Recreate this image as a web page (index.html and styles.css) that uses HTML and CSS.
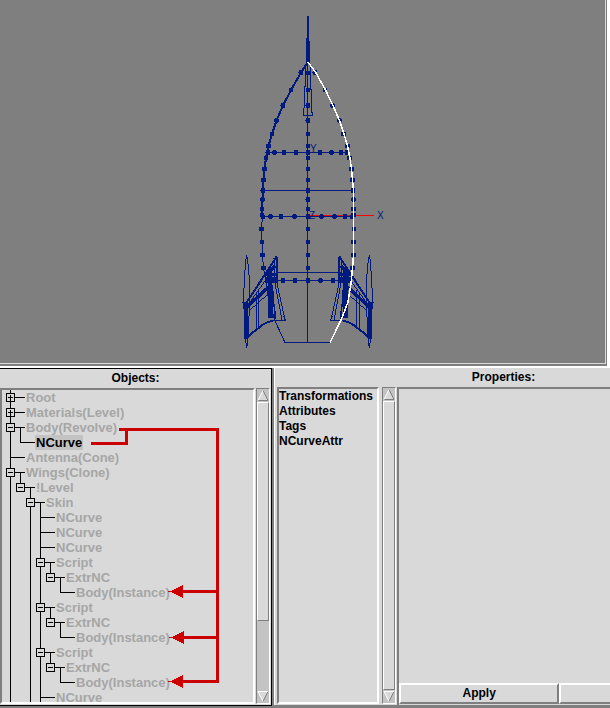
FILE: index.html
```html
<!DOCTYPE html>
<html lang="en">
<head>
<meta charset="utf-8">
<title>Modeler</title>
<link rel="stylesheet" href="styles.css">
</head>
<body>
<main class="app">
  <section class="view" aria-label="Front view">
    <svg class="scene" viewBox="0 0 605 363" role="img" aria-label="Rocket wireframe">
      <path class="axis" d="M308 215.5H374"/>
      <g class="wire">
        <path class="bold" d="M308 16V62"/>
        <path d="M306.500 38V62L305.500 66V86H304.500V105L303.500 111V115.500H312.500V113L311.500 112V89H310.500V68L309.500 62V41M307.500 62V342"/>
        <path class="hull" d="M308 62L301 72.500L291 90L283 105.500L276.500 120.500L272 134L268.500 146L266 158L264.500 169L263.500 180L262.500 199L262 215"/>
        <path d="M262.500 215L261.500 229L262 242L262.500 255L263.500 268L266 281L268 296L275 321L285 342.500H330M267 152.500H349M263 190.500H353M262 216.500H353M276 272.500H342M268 280.500H350"/>
      </g>
      <path class="dots" d="M301 72.500h0M291 90h0M283 105.500h0M276.500 120.500h0M272 134h0M268.500 146h0M266 158h0M264.500 169h0M263.500 180h0M263 190.500h0M262.500 199.500h0M262 209h0M262 215h0M261.500 229h0M262 242h0M262.500 255h0M263.500 268h0
        M315 72.500h0M325 90h0M332.500 105.500h0M339.500 120.500h0M343.500 134h0M347.500 146h0M349.500 158h0M351.500 169h0M352.500 180h0M353 190.500h0M353.500 199.500h0M353.500 209h0M353.500 215h0M354 229h0M353.500 242h0M353.500 255h0M352.500 268h0
        M308 73h0M308 90h0M308 105.500h0M308 120.500h0M308 134h0M308 146h0M308 158h0M308 169h0M308 180h0M308 190.500h0M308 199.500h0M308 209h0M308 229h0M308 242h0M308 255h0M308 268h0
        M268 152.500h0M274.500 152.500h0M284 152.500h0M296 152.500h0M308 152.500h0M320 152.500h0M331.500 152.500h0M341 152.500h0M347 152.500h0
        M263 217h0M270.500 216.500h0M281 216.500h0M294.500 216.500h0M308 216.500h0M321.500 216.500h0M334.500 216.500h0M345 216.500h0M352 217h0
        M270 280.500h0M275 280.500h0M283 280.500h0M295 280.500h0M308 280.500h0M320.500 280.500h0M333 280.500h0M341 280.500h0M346 280.500h0"/>
      <g transform="translate(230 235) scale(.33333)">
        <g id="fin" class="fin">
          <path d="M50 60L46 85L43 150L40 175V205L43 230L45 300L50 340L55 300L59 190L58 130L54 85ZM36 203H48"/>
          <path class="beam" d="M50 216L118 154"/>
          <path class="edge" d="M48 205L138 68M50 312L66 294L82 282L97 270L112 262L130 256"/>
          <path d="M56 207L132 100M60 225L120 172M138 66L142 150L155 210L166 258M132 70L134 140L148 212L156 256M126 100V160L138 252M134 66H142V130M110 105L116 160"/>
          <path class="post" d="M49 200V312M120 108V250"/>
          <path class="beam" d="M106 120L136 92M104 140H138M106 118H140M104 130H142"/>
          <path d="M80 172V284M87 166V278M130 256H167L160 244M127 150L128 250M128 150L134 248"/>
        </g>
        <use href="#fin" transform="translate(468 0) scale(-1 1)"/>
      </g>
      <path class="curve" d="M308 62L316 73L325.500 90L333 105.500L339.500 120.500L344 134L347.500 146L350 158L351.500 169L352.500 180L353.500 190V255L352.500 268L351 284L348 302L341.500 319L330 342.500"/>
      <g class="labels"><text x="310" y="152">Y</text><text x="309" y="219">Z</text><text x="377" y="219">X</text></g>
    </svg>
  </section>

  <div class="panels">
    <section class="objects">
      <h2>Objects:</h2>
      <div class="pane">
        <div class="tree">
          <ul>
            <li class="more"><div class="row"><button class="toggle plus" aria-label="Expand Root"></button><span>Root</span></div></li>
            <li class="more"><div class="row"><button class="toggle plus" aria-label="Expand Materials"></button><span>Materials(Level)</span></div></li>
            <li class="more"><div class="row"><button class="toggle" aria-label="Collapse Body"></button><span>Body(Revolve)</span></div>
              <ul><li><div class="row"><span class="selected">NCurve</span></div></li></ul>
            </li>
            <li class="more"><div class="row"><span>Antenna(Cone)</span></div></li>
            <li class="more"><div class="row"><button class="toggle" aria-label="Collapse Wings"></button><span>Wings(Clone)</span></div>
              <ul><li><div class="row"><button class="toggle" aria-label="Collapse Level"></button><span>!Level</span></div>
                <ul><li class="more"><div class="row"><button class="toggle" aria-label="Collapse Skin"></button><span>Skin</span></div>
                  <ul>
                    <li class="more"><div class="row"><span>NCurve</span></div></li>
                    <li class="more"><div class="row"><span>NCurve</span></div></li>
                    <li class="more"><div class="row"><span>NCurve</span></div></li>
                    <li class="more"><div class="row"><button class="toggle" aria-label="Collapse Script"></button><span>Script</span></div>
                      <ul><li><div class="row"><button class="toggle" aria-label="Collapse ExtrNC"></button><span>ExtrNC</span></div>
                        <ul><li><div class="row"><span>Body(Instance)</span></div></li></ul></li></ul>
                    </li>
                    <li class="more"><div class="row"><button class="toggle" aria-label="Collapse Script"></button><span>Script</span></div>
                      <ul><li><div class="row"><button class="toggle" aria-label="Collapse ExtrNC"></button><span>ExtrNC</span></div>
                        <ul><li><div class="row"><span>Body(Instance)</span></div></li></ul></li></ul>
                    </li>
                    <li class="more"><div class="row"><button class="toggle" aria-label="Collapse Script"></button><span>Script</span></div>
                      <ul><li><div class="row"><button class="toggle" aria-label="Collapse ExtrNC"></button><span>ExtrNC</span></div>
                        <ul><li><div class="row"><span>Body(Instance)</span></div></li></ul></li></ul>
                    </li>
                    <li class="more"><div class="row"><span>NCurve</span></div></li>
                  </ul></li></ul></li></ul>
            </li>
          </ul>
          <svg class="links" width="252" height="312" viewBox="2 390 252 312" aria-hidden="true">
            <path d="M119 429.500H217.500V681.500H183M91 443.500H126.500V429.500M183 591.500H217.500M183 637.500H217.500"/>
            <path class="tip" d="M168 591h3l12-6v13l-12-6h-3ZM169 637h3l12-6v13l-12-6h-3ZM168 681h3l12-6v13l-12-6h-3Z"/>
          </svg>
        </div>
        <div class="scroll">
          <button class="arrow" aria-label="Scroll up"><svg viewBox="0 0 12 12"><path class="face" d="M6 1L11 11H1Z"/><path class="dark" d="M6 1L11 11H1"/><path class="lite" d="M1 11L6 1"/></svg></button>
          <div class="trough"><div class="thumb part"></div></div>
          <button class="arrow" aria-label="Scroll down"><svg viewBox="0 0 12 12"><path class="face" d="M1 1H11L6 11Z"/><path class="dark" d="M11 1L6 11"/><path class="lite" d="M11 1H1L6 11"/></svg></button>
        </div>
      </div>
    </section>

    <section class="properties">
      <div class="attributes">
        <ul class="list"><li>Transformations</li><li>Attributes</li><li>Tags</li><li>NCurveAttr</li></ul>
        <div class="scroll">
          <button class="arrow" aria-label="Scroll up"><svg viewBox="0 0 12 12"><path class="face" d="M6 1L11 11H1Z"/><path class="dark" d="M6 1L11 11H1"/><path class="lite" d="M1 11L6 1"/></svg></button>
          <div class="trough"><div class="thumb"></div></div>
          <button class="arrow" aria-label="Scroll down"><svg viewBox="0 0 12 12"><path class="face" d="M1 1H11L6 11Z"/><path class="dark" d="M11 1L6 11"/><path class="lite" d="M11 1H1L6 11"/></svg></button>
        </div>
      </div>
      <div class="editor">
        <h2>Properties:</h2>
        <div class="form">
          <div class="actions"><button class="action">Apply</button><button class="action" aria-label="Reset"></button></div>
        </div>
      </div>
    </section>
  </div>
</main>
</body>
</html>
```
FILE: styles.css
```css
* { box-sizing: border-box; }

body {
  margin: 0;
  background: #d9d9d9;
  color: #000;
  font: bold 12px/15px "Liberation Sans", Arial, sans-serif;
}

ul { list-style: none; margin: 0; padding: 0; }
h2 { margin: 0; font-size: 12px; line-height: 19px; text-align: center; }
button { font: inherit; color: inherit; padding: 0; border-radius: 0; }

.app {
  display: grid;
  grid-template-rows: minmax(0, 366fr) minmax(0, 342fr);
  height: 100vh;
  overflow: hidden;
}

/* 3D view */
.view {
  display: flex;
  min-height: 0;
  background: #7f7f7f;
  border-right: 3px solid #fff;
  padding: 0 1px 2px 0;
}
.scene {
  flex: 1;
  min-width: 0;
  height: 100%;
  border: solid #d9d9d9;
  border-width: 0 1px 1px 0;
  fill: none;
  shape-rendering: crispEdges;
}
.wire { stroke: #001a7f; }
.bold { stroke-width: 2px; }
.hull { stroke-width: 2px; }
.dots { stroke: #001a7f; stroke-width: 5px; stroke-linecap: round; }
.fin { stroke: #001a7f; stroke-width: 3px; }
.edge { stroke-width: 6px; }
.beam { stroke-width: 10px; }
.post { stroke-width: 12px; }
.axis { stroke: #f00; }
.curve { stroke: #fff; stroke-width: 1.5px; }
.labels { fill: #001a7f; font: 10px "Liberation Sans", Arial, sans-serif; }

/* Lower panels */
.panels {
  display: grid;
  grid-template-columns: minmax(0, 272fr) minmax(0, 338fr);
  min-height: 0;
  border-top: 2px solid #fff;
  border-bottom: 2px solid #7f7f7f;
}
.objects {
  display: flex;
  flex-direction: column;
  min-height: 0;
  border: solid #000;
  border-width: 1px 1px 1px 0;
}
.pane { flex: 1; display: flex; min-height: 0; padding: 0 1px 1px 0; }
.tree {
  position: relative;
  flex: 1;
  min-width: 0;
  margin-right: 1px;
  overflow: hidden;
  border: 2px solid;
  border-color: #7f7f7f #fff #fff #7f7f7f;
  color: #a6a6a6;
  font-size: 13px;
}
.tree > ul { padding-left: 8px; }
.tree li { position: relative; }
.tree li ul { padding-left: 10px; }
.tree li::before {
  content: "";
  position: absolute;
  top: -7px;
  left: 0;
  width: 1px;
  height: 15px;
  background: #000;
}
.tree li.more::before { height: auto; bottom: 0; }
.row { position: relative; display: flex; height: 15px; padding-left: 15px; white-space: nowrap; }
.row::before {
  content: "";
  position: absolute;
  top: 7px;
  left: 0;
  width: 15px;
  height: 1px;
  background: #000;
}
.row span { padding: 0 1px; }
.row .selected { color: #000; background: #c3c3c3; }
.toggle {
  position: absolute;
  top: 3px;
  left: -4px;
  width: 9px;
  height: 9px;
  border: 1px solid #000;
  background: linear-gradient(#000, #000) center / 5px 1px no-repeat #d9d9d9;
}
.plus {
  background:
    linear-gradient(#000, #000) center / 5px 1px no-repeat,
    linear-gradient(#000, #000) center / 1px 5px no-repeat,
    #d9d9d9;
}
.links { position: absolute; top: 0; left: 0; fill: none; stroke: #c00; stroke-width: 3px; shape-rendering: crispEdges; }
.tip { fill: #c00; stroke: none; }

/* Scroll bars */
.scroll {
  display: flex;
  flex-direction: column;
  flex: 0 0 14px;
  border: 1px solid;
  border-color: #7f7f7f #fff #fff #7f7f7f;
  background: #c3c3c3;
}
.arrow { display: flex; height: 13px; border: 0; background: none; }
.arrow svg { width: 12px; height: 13px; fill: none; }
.arrow .face { fill: #d9d9d9; }
.dark { stroke: #7f7f7f; }
.lite { stroke: #fff; }
.trough { flex: 1; min-height: 0; }
.thumb {
  height: 100%;
  background: #d9d9d9;
  border: 1px solid;
  border-color: #fff #7f7f7f #7f7f7f #fff;
}
.part { height: 76%; }

/* Properties */
.properties {
  display: grid;
  grid-template-columns: minmax(0, 122fr) minmax(0, 213fr);
  gap: 1px;
  min-height: 0;
  border-left: 2px solid #7f7f7f;
  border-bottom: 1px solid #7f7f7f;
}
.attributes { display: flex; gap: 3px; padding: 19px 0 1px 2px; border-left: 1px solid #fff; }
.list {
  flex: 1;
  min-width: 0;
  border: 2px solid;
  border-color: #7f7f7f #fff #fff #7f7f7f;
  white-space: nowrap;
}
.editor { display: flex; flex-direction: column; min-width: 0; }
.form {
  flex: 1;
  display: flex;
  align-items: flex-end;
  padding-bottom: 1px;
  border: solid #7f7f7f;
  border-width: 2px 0 0 2px;
}
.actions { flex: 1; display: flex; overflow: hidden; }
.action {
  flex: 0 0 76%;
  height: 21px;
  background: #d9d9d9;
  border: 2px solid;
  border-color: #fff #7f7f7f #7f7f7f #fff;
}
```
